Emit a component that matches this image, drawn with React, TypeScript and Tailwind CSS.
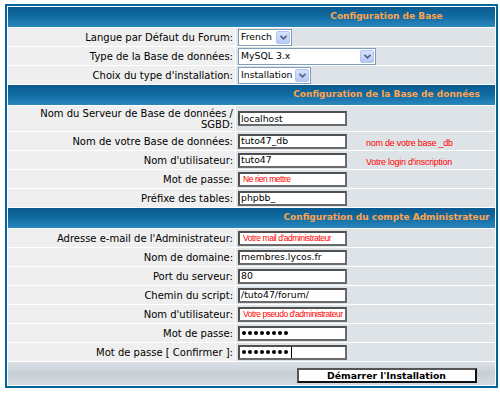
import React from "react";

const SANS = "[font-family:'DejaVu_Sans',Verdana,sans-serif]";
const ARIAL = "[font-family:'Liberation_Sans',Arial,sans-serif]";

const Header = ({ title }: { title: string }) => (
  <div
    className={`h-[20px] flex items-center justify-center pl-[270px] bg-linear-to-b from-[#0a5a8e] via-[#106ca2] to-[#2a88bf] text-[#ffa34f] font-bold text-[9px] whitespace-nowrap ${SANS}`}
  >
    {title}
  </div>
);

const Row = ({
  label,
  children,
  tall,
}: {
  label: React.ReactNode;
  children: React.ReactNode;
  tall?: boolean;
}) => (
  <div className={`flex gap-px ${tall ? "h-[25px]" : "h-[18px]"}`}>
    <div
      className={`w-[227px] bg-[#efefef] flex items-center justify-end text-right pr-[2px] text-[10px] leading-[11px] text-black ${SANS}`}
    >
      <span>{label}</span>
    </div>
    <div className="flex-1 bg-[#dee3e7] flex items-center pl-[2px]">{children}</div>
  </div>
);

const Chevron = () => (
  <div className="w-[14px] h-[13px] mr-px bg-linear-to-b from-[#d6e1fc] to-[#b6c9f6] border border-[#b2c5f1] rounded-[2px] flex items-center justify-center">
    <svg width="7" height="5" viewBox="0 0 7 5">
      <path d="M0.5 0.8 L3.5 3.8 L6.5 0.8" fill="none" stroke="#4d6185" strokeWidth="1.6" />
    </svg>
  </div>
);

const Select = ({ value, className }: { value: string; className: string }) => (
  <div
    className={`h-[17px] border border-[#7f9db9] bg-white flex items-center justify-between pl-[2px] text-[9.3px] text-black ${SANS} ${className}`}
  >
    <span>{value}</span>
    <Chevron />
  </div>
);

const Field = ({ children }: { children?: React.ReactNode }) => (
  <div
    className={`w-[109px] h-[15px] bg-white border-2 border-t-[#505050] border-l-[#505050] border-r-[#6a6a6a] border-b-[#6a6a6a] flex items-center pl-[1px] text-[9.3px] text-black whitespace-nowrap overflow-hidden ${SANS}`}
  >
    {children}
  </div>
);

const RedText = ({ children }: { children: React.ReactNode }) => (
  <span className={`pl-[2px] text-[8.5px] text-[#ff0000] tracking-[-0.45px] ${ARIAL}`}>{children}</span>
);

const Hint = ({ children }: { children: React.ReactNode }) => (
  <span className={`ml-[19px] mt-[5px] text-[9px] text-[#ff0000] tracking-[-0.25px] ${ARIAL}`}>
    {children}
  </span>
);

const Dots = ({ caret }: { caret?: boolean }) => (
  <div className="flex items-center gap-[2px] pl-[1px]">
    {[0, 1, 2, 3, 4, 5, 6, 7].map((i) => (
      <span key={i} className="w-[4px] h-[4px] rounded-full bg-black" />
    ))}
    {caret && <span className="w-px h-[11px] bg-black ml-[1px]" />}
  </div>
);

export default function App() {
  return (
    <div className="w-[500px] h-[395px] bg-white pt-[4px] pl-[5px]">
      <div className="w-[493px] border-2 border-[#006699] bg-white p-px flex flex-col gap-px">
        <Header title="Configuration de Base" />
        <Row label="Langue par Défaut du Forum:">
          <Select value="French" className="w-[54px]" />
        </Row>
        <Row label="Type de la Base de données:">
          <Select value="MySQL 3.x" className="w-[138px]" />
        </Row>
        <Row label="Choix du type d'installation:">
          <Select value="Installation" className="w-[73px]" />
        </Row>

        <Header title="Configuration de la Base de données" />
        <Row
          tall
          label={
            <>
              Nom du Serveur de Base de données /<br />
              SGBD:
            </>
          }
        >
          <Field>localhost</Field>
        </Row>
        <Row label="Nom de votre Base de données:">
          <Field>tuto47_db</Field>
          <Hint>nom de votre base _db</Hint>
        </Row>
        <Row label="Nom d'utilisateur:">
          <Field>tuto47</Field>
          <Hint>Votre login d'inscription</Hint>
        </Row>
        <Row label="Mot de passe:">
          <Field>
            <RedText>Ne rien mettre</RedText>
          </Field>
        </Row>
        <Row label="Préfixe des tables:">
          <Field>phpbb_</Field>
        </Row>

        <Header title="Configuration du compte Administrateur" />
        <Row label="Adresse e-mail de l'Administrateur:">
          <Field>
            <RedText>Votre mail d'administrateur</RedText>
          </Field>
        </Row>
        <Row label="Nom de domaine:">
          <Field>membres.lycos.fr</Field>
        </Row>
        <Row label="Port du serveur:">
          <Field>80</Field>
        </Row>
        <Row label="Chemin du script:">
          <Field>/tuto47/forum/</Field>
        </Row>
        <Row label="Nom d'utilisateur:">
          <Field>
            <RedText>Votre pseudo d'administrateur</RedText>
          </Field>
        </Row>
        <Row label="Mot de passe:">
          <Field>
            <Dots />
          </Field>
        </Row>
        <Row label="Mot de passe [ Confirmer ]:">
          <Field>
            <Dots caret />
          </Field>
        </Row>

        <div className="h-[23px] flex items-end justify-center pl-[270px] pb-[2px] bg-linear-to-b from-[#dbe1e6] via-[#c6cfd6] to-[#d5dbe0]">
          <button
            type="button"
            className={`w-[180px] h-[15px] bg-white border-2 border-t-[#555] border-l-[#555] border-r-[#111] border-b-[#111] flex items-center justify-center text-[9.3px] font-bold text-black leading-none ${SANS}`}
          >
            Démarrer l'Installation
          </button>
        </div>
      </div>
    </div>
  );
}
